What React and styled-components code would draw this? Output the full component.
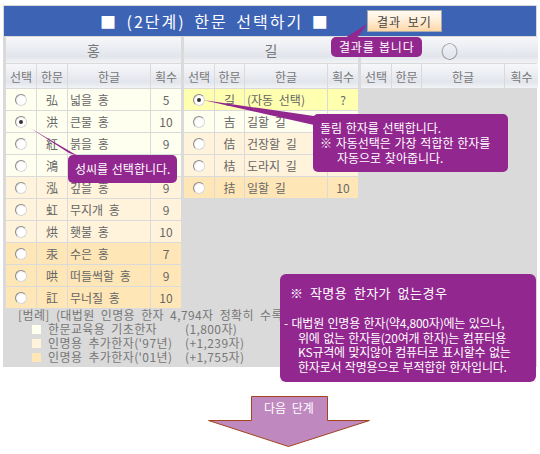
import React from 'react';
import styled, { createGlobalStyle } from 'styled-components';

const GlobalStyle = createGlobalStyle`
  body {
    margin: 0;
    background: #fff;
    font-family: "Noto Sans CJK KR", "Noto Sans", sans-serif;
    word-spacing: 3px;
  }
`;

const tones = {
  basic: '#fffff0',
  add97: '#fff3dc',
  add01: '#ffe6b6',
  auto: '#ffffb0',
};

const surnameRows = [
  { hanja: '弘', hangul: '넓을 홍', strokes: '5', tone: 'basic' },
  { hanja: '洪', hangul: '큰물 홍', strokes: '10', tone: 'basic', checked: true },
  { hanja: '紅', hangul: '붉을 홍', strokes: '9', tone: 'basic' },
  { hanja: '鴻', hangul: '기러기 홍', strokes: '17', tone: 'basic' },
  { hanja: '泓', hangul: '깊을 홍', strokes: '9', tone: 'add97' },
  { hanja: '虹', hangul: '무지개 홍', strokes: '9', tone: 'add97' },
  { hanja: '烘', hangul: '횃불 홍', strokes: '10', tone: 'add97' },
  { hanja: '汞', hangul: '수은 홍', strokes: '7', tone: 'add01' },
  { hanja: '哄', hangul: '떠들썩할 홍', strokes: '9', tone: 'add01' },
  { hanja: '訌', hangul: '무너질 홍', strokes: '10', tone: 'add01' },
];

const dollimRows = [
  { hanja: '길', hangul: '(자동 선택)', strokes: '?', tone: 'auto', checked: true },
  { hanja: '吉', hangul: '길할 길', strokes: '6', tone: 'basic' },
  { hanja: '佶', hangul: '건장할 길', strokes: '8', tone: 'add97' },
  { hanja: '桔', hangul: '도라지 길', strokes: '10', tone: 'add97' },
  { hanja: '拮', hangul: '일할 길', strokes: '10', tone: 'add01' },
];

const App = () => {
  return (
    <Page>
      <GlobalStyle />
      <Panel>
        <TitleBar>
          <Title>■ (2단계) 한문 선택하기 ■</Title>
          <ResultButton>결과 보기</ResultButton>
        </TitleBar>

        <Tables>
          <HanjaTable title="홍" rows={surnameRows} cols="30px 30px 82px 30px" />
          <HanjaTable title="길" rows={dollimRows} cols="30px 29px 82px 30px" />
          <HanjaTable title="○" rows={[]} cols="30px 29px 82px 33px" big />
        </Tables>

        <Legend>
          <LegendTitle>[범례] (대법원 인명용 한자 4,794자 정확히 수록)</LegendTitle>
          <LegendItem tone="basic" name="한문교육용 기초한자" count="(1,800자)" />
          <LegendItem tone="add97" name="인명용 추가한자('97년)" count="(+1,239자)" />
          <LegendItem tone="add01" name="인명용 추가한자('01년)" count="(+1,755자)" />
        </Legend>
      </Panel>

      <ArrowWrap>
        <svg width="164" height="52" viewBox="0 0 164 52">
          <path d="M44.5,0.5 H120.5 V24.5 H162.5 L81.5,50.5 L1.5,24.5 H44.5 Z" fill="#bf88bf" stroke="#a3441e" strokeWidth="1" />
          <text x="82" y="17" textAnchor="middle" fill="#fff" fontSize="12" fontFamily="Noto Sans CJK KR, sans-serif">다음 단계</text>
        </svg>
      </ArrowWrap>

      {/* callout pointers */}
      <Pointers width="540" height="454" viewBox="0 0 540 454">
        <polygon points="30,128 69,153 78,156" fill="#92278f" />
        <polygon points="203,100 314,116 314,125" fill="#92278f" />
        <polygon points="345,38 357,38 367,24" fill="#92278f" />
      </Pointers>

      <Callout top={155} left={68} width={109} height={28}>
        <CalloutLine>성씨를 선택합니다.</CalloutLine>
      </Callout>
      <Callout top={114} left={313} width={195} height={58}>
        <CalloutLine>돌림 한자를 선택합니다.</CalloutLine>
        <CalloutLine>※ 자동선택은 가장 적합한 한자를</CalloutLine>
        <CalloutLine indent>자동으로 찾아줍니다.</CalloutLine>
      </Callout>
      <Callout top={37} left={331} width={91} height={20} small>
        <CalloutLine>결과를 봅니다</CalloutLine>
      </Callout>

      <NoteBox>
        <NoteTitle>※ 작명용 한자가 없는경우</NoteTitle>
        <NoteLine>- 대법원 인명용 한자(약4,800자)에는 있으나,</NoteLine>
        <NoteLine indent>위에 없는 한자들(20여개 한자)는 컴퓨터용</NoteLine>
        <NoteLine indent>KS규격에 맞지않아 컴퓨터로 표시할수 없는</NoteLine>
        <NoteLine indent>한자로서 작명용으로 부적합한 한자입니다.</NoteLine>
      </NoteBox>
    </Page>
  );
};

const HanjaTable = ({ title, rows, cols, big }) => (
  <Grid cols={cols}>
    <GroupHead big={big}>{title}</GroupHead>
    <ColHead>선택</ColHead>
    <ColHead>한문</ColHead>
    <ColHead>한글</ColHead>
    <ColHead>획수</ColHead>
    {rows.map(row => (
      <React.Fragment key={row.hanja}>
        <Cell tone={row.tone}><Radio checked={row.checked} /></Cell>
        <Cell tone={row.tone}>{row.hanja}</Cell>
        <Cell tone={row.tone} left>{row.hangul}</Cell>
        <Cell tone={row.tone}>{row.strokes}</Cell>
      </React.Fragment>
    ))}
  </Grid>
);

const LegendItem = ({ tone, name, count }) => (
  <LegendRow>
    <Swatch tone={tone} />
    <LegendName>{name}</LegendName>
    <span>{count}</span>
  </LegendRow>
);

export default App;

const Page = styled.div`
  position: relative;
  width: 540px;
  height: 454px;
  padding: 5px 0 0 3px;
  box-sizing: border-box;
  overflow: hidden;
`;

const Panel = styled.div`
  width: 534px;
  background: #dadada;
  padding: 1px 1px 3px;
  box-sizing: border-box;
`;

const TitleBar = styled.div`
  height: 30px;
  background: #3d63b5;
  display: flex;
  align-items: center;
  padding-left: 96px;
`;

const Title = styled.div`
  width: 267px;
  color: #fff;
  font-size: 16px;
  letter-spacing: 2px;
  white-space: pre;
`;

const ResultButton = styled.div`
  width: 75px;
  height: 22px;
  box-sizing: border-box;
  border: 1px solid #a9a9a9;
  background: linear-gradient(#fffaf3, #ffefd9 45%, #ffd7a8);
  color: #444;
  font-size: 12px;
  letter-spacing: 1px;
  display: flex;
  align-items: center;
  justify-content: center;
`;

const Tables = styled.div`
  display: flex;
  align-items: flex-start;
  gap: 3px;
  margin-top: 1px;
  padding-left: 2px;
`;

const Grid = styled.div`
  display: grid;
  grid-template-columns: ${props => props.cols};
  grid-template-rows: 26px 24px;
  grid-auto-rows: 21px;
  gap: 1px;
`;

const headBg = `
  background: linear-gradient(#f7f7f9, #eceef3 40%, #e2e5ec 75%, #f2f3f6);
`;

const GroupHead = styled.div`
  grid-column: 1 / -1;
  ${headBg}
  display: flex;
  align-items: center;
  justify-content: center;
  color: #777;
  font-size: ${props => (props.big ? '17px' : '14px')};
`;

const ColHead = styled.div`
  ${headBg}
  display: flex;
  align-items: center;
  justify-content: center;
  color: #777;
  font-size: 12px;
`;

const Cell = styled.div`
  background: ${props => tones[props.tone]};
  display: flex;
  align-items: center;
  justify-content: ${props => (props.left ? 'flex-start' : 'center')};
  padding-left: ${props => (props.left ? '2px' : '0')};
  color: #666;
  font-size: 12px;
  white-space: nowrap;
  overflow: hidden;
`;

const Radio = styled.span`
  width: 12px;
  height: 12px;
  box-sizing: border-box;
  border-radius: 50%;
  border: 1px solid #8a8a8a;
  border-right-color: #d8d8d8;
  border-bottom-color: #d8d8d8;
  background: radial-gradient(circle at 60% 60%, #fff 45%, #e2e2e2);
  display: flex;
  align-items: center;
  justify-content: center;
  &::after {
    content: '';
    width: 4px;
    height: 4px;
    border-radius: 50%;
    background: ${props => (props.checked ? '#333' : 'transparent')};
  }
`;

const Legend = styled.div`
  padding-left: 14px;
  color: #777;
  font-size: 12px;
  line-height: 14px;
  letter-spacing: 0.4px;
`;

const LegendTitle = styled.div`
  white-space: nowrap;
`;

const LegendRow = styled.div`
  display: flex;
  align-items: center;
  padding-left: 14px;
  white-space: nowrap;
`;

const Swatch = styled.span`
  width: 9px;
  height: 9px;
  background: ${props => tones[props.tone]};
  margin-right: 7px;
`;

const LegendName = styled.span`
  width: 137px;
`;

const ArrowWrap = styled.div`
  margin: 29px 0 0 204px;
  width: 164px;
  height: 52px;
`;

const Pointers = styled.svg`
  position: absolute;
  left: 0;
  top: 0;
  pointer-events: none;
`;

const Callout = styled.div`
  position: absolute;
  top: ${props => props.top}px;
  left: ${props => props.left}px;
  width: ${props => props.width}px;
  height: ${props => props.height}px;
  box-sizing: border-box;
  background: #92278f;
  border-radius: 5px;
  color: #fff;
  font-size: 12px;
  line-height: 15px;
  word-spacing: 1px;
  padding: ${props => (props.small ? '2px 0 0 8px' : '6px 0 0 7px')};
  letter-spacing: ${props => (props.small ? '0.8px' : '0')};
`;

const CalloutLine = styled.div`
  white-space: nowrap;
  padding-left: ${props => (props.indent ? '17px' : '0')};
`;

const NoteBox = styled.div`
  position: absolute;
  left: 280px;
  top: 274px;
  width: 256px;
  height: 108px;
  box-sizing: border-box;
  background: #92278f;
  border-radius: 6px;
  color: #fff;
  padding: 9px 0 0 4px;
`;

const NoteTitle = styled.div`
  font-size: 13px;
  padding-left: 6px;
  margin-bottom: 14px;
  letter-spacing: 0.5px;
`;

const NoteLine = styled.div`
  font-size: 12px;
  line-height: 14.5px;
  letter-spacing: -0.2px;
  word-spacing: 1px;
  white-space: nowrap;
  padding-left: ${props => (props.indent ? '14px' : '0')};
`;
